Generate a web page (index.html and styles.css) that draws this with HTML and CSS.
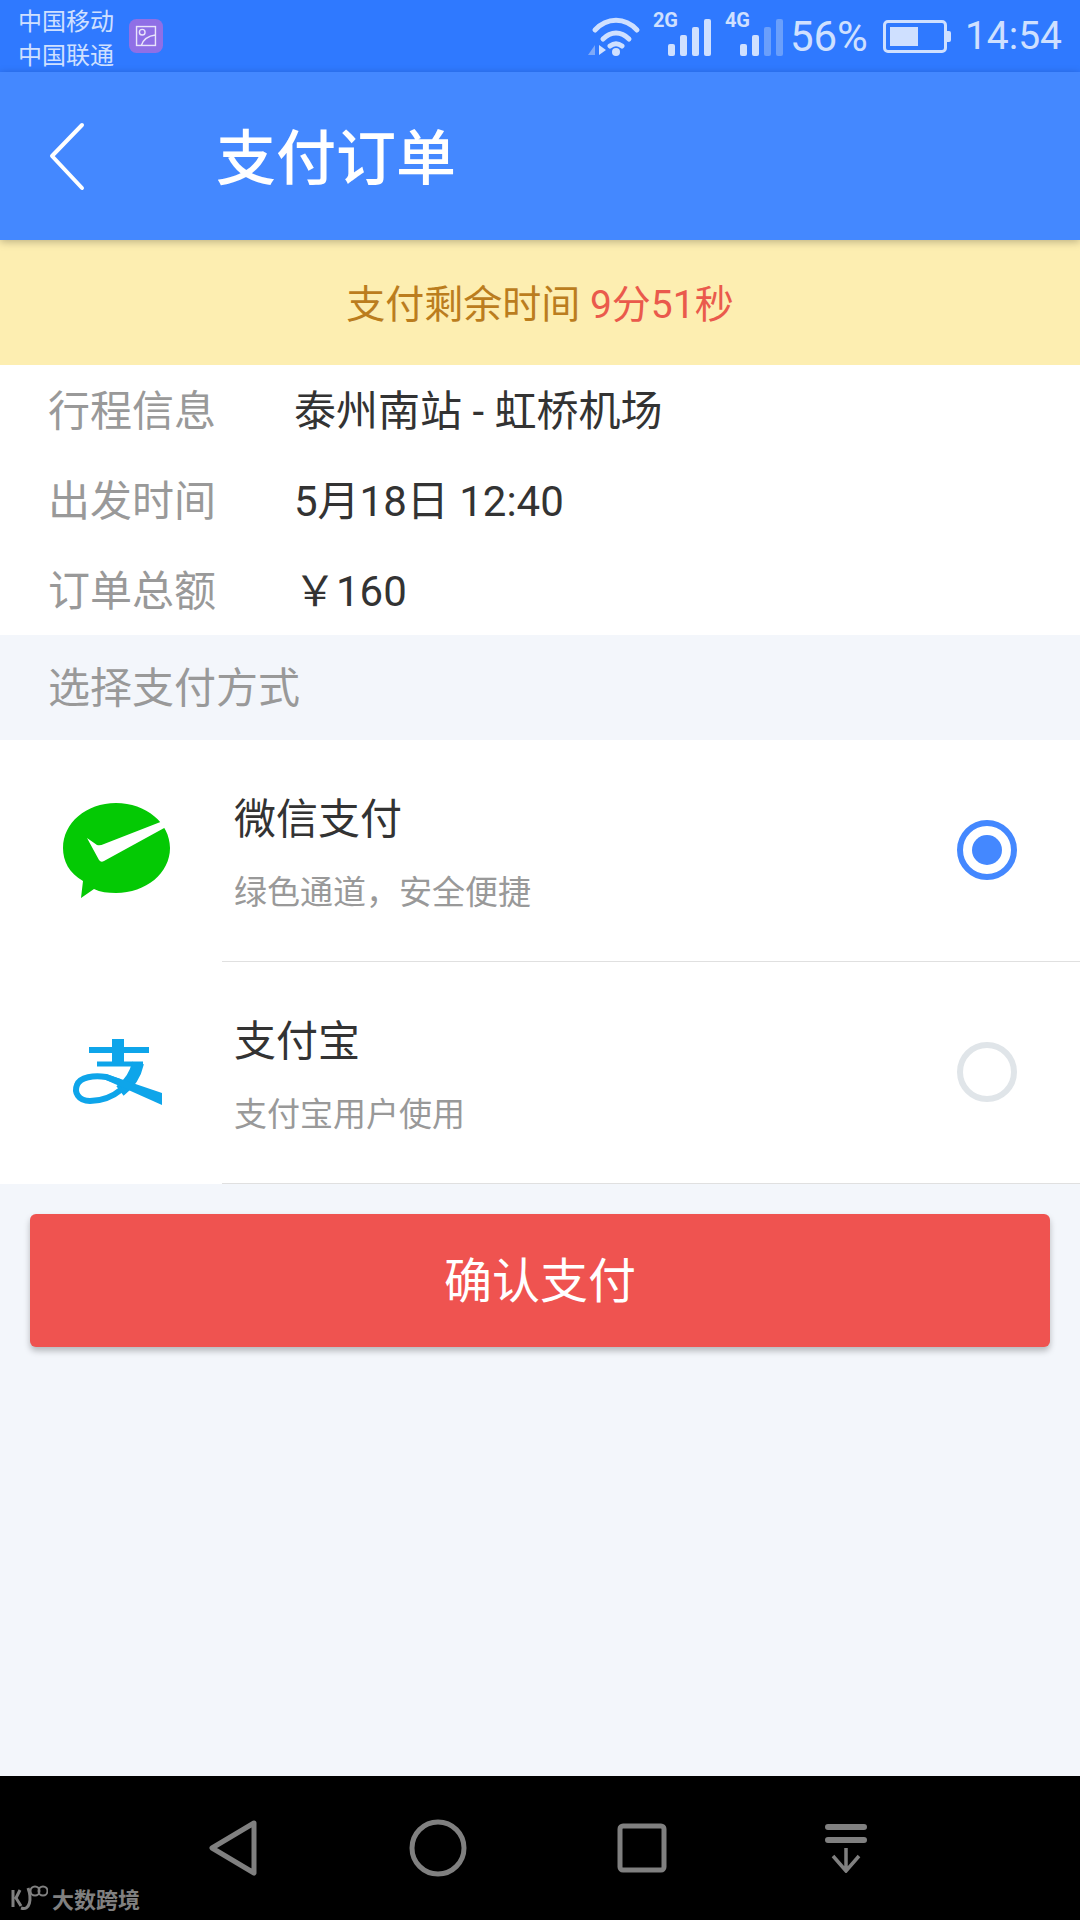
FILE: index.html
```html
<!DOCTYPE html>
<html>
<head>
  <title>支付订单</title>
  <meta name="viewport" content="width=device-width, initial-scale=1">
  <link rel="stylesheet" href="styles.css">
</head>
<body>
  <div class="statusbar">
    <div class="carriers">
      <span>中国移动</span>
      <span>中国联通</span>
    </div>
    <svg class="notify" width="34" height="34" viewBox="0 0 36 36">
      <rect width="36" height="36" rx="8" fill="#8f6fe6"/>
      <rect x="8" y="8" width="20" height="20" fill="none" stroke="#e8e4fb" stroke-width="1.5"/>
      <circle cx="14" cy="14" r="3" fill="none" stroke="#e8e4fb" stroke-width="1.5"/>
      <path d="M13 28 C15 22 20 18 28 17" fill="none" stroke="#e8e4fb" stroke-width="1.5"/>
    </svg>
    <div class="status-right">
      <svg class="wifi" width="58" height="42" viewBox="0 0 58 42">
        <g fill="none" stroke="#cfe0ff" stroke-width="5" stroke-linecap="round">
          <path d="M8 15 C20 2 38 2 50 15"/>
          <path d="M16 24 C24 16 34 16 42 24"/>
          <path d="M23 31 C27 28 31 28 35 31"/>
        </g>
        <circle cx="29" cy="37" r="4" fill="#cfe0ff"/>
        <path d="M8 30 L8 40 L1 40 Z" fill="#7ea9f8"/>
        <path d="M12 30 L19 35 L12 40 Z" fill="#cfe0ff"/>
      </svg>
      <div class="signal sim-one">
        <b>2G</b>
        <i class="bar b1"></i><i class="bar b2"></i><i class="bar b3"></i><i class="bar b4"></i>
      </div>
      <div class="signal sim-two">
        <b>4G</b>
        <i class="bar b1"></i><i class="bar b2"></i><i class="bar b3 dim"></i><i class="bar b4 dim"></i>
      </div>
      <span class="percent">56%</span>
      <div class="battery"><div class="battery-fill"></div></div>
      <span class="clock">14:54</span>
    </div>
  </div>

  <div class="header">
    <svg class="back" width="36" height="70" viewBox="0 0 36 70">
      <path d="M33 4 L3 35 L33 67" fill="none" stroke="#fff" stroke-width="4" stroke-linecap="round" stroke-linejoin="round"/>
    </svg>
    <h1>支付订单</h1>
  </div>

  <div class="main">
    <div class="countdown">支付剩余时间 <span class="remain">9分51秒</span></div>

    <div class="info">
      <div class="info-row"><label>行程信息</label><span>泰州南站 - 虹桥机场</span></div>
      <div class="info-row"><label>出发时间</label><span>5月18日 12:40</span></div>
      <div class="info-row"><label>订单总额</label><span>￥160</span></div>
    </div>

    <div class="section-title">选择支付方式</div>

    <div class="pay-list">
      <div class="pay-row">
        <div class="pay-icon">
          <svg width="112" height="100" viewBox="0 0 112 100">
            <path d="M56 2 C86 2 110 22 110 47 C110 72 86 92 56 92 C48 92 40 91 34 88 L21 97 L23 80 C9 72 3 60 3 47 C3 22 26 2 56 2 Z" fill="#04c904"/>
            <path d="M27 37 L37 44 Q40 45 44 43 L103 20 L106 26 L44 60 Q41 62 39 59 Z" fill="#fff"/>
          </svg>
        </div>
        <div class="pay-body">
          <div class="pay-text">
            <div class="pay-name">微信支付</div>
            <div class="pay-desc">绿色通道，安全便捷</div>
          </div>
          <div class="radio checked"></div>
        </div>
      </div>
      <div class="pay-row">
        <div class="pay-icon">
          <svg width="92" height="68" viewBox="0 0 92 68">
            <g fill="none" stroke="#0ea5ea">
              <path d="M19 11 H79" stroke-width="6"/>
              <path d="M27 25 H73" stroke-width="5"/>
              <path d="M48 0 V25" stroke-width="12"/>
              <path d="M68 24 C65 38 58 46 50 52" stroke-width="12"/>
              <path d="M52 50 C40 60 28 62 20 62 C8 62 4 53 7 46 C10 38 24 36 36 38 L50 43" stroke-width="6"/>
            </g>
            <path d="M36 35 L92 54 V66 L36 41 Z" fill="#0ea5ea"/>
          </svg>
        </div>
        <div class="pay-body">
          <div class="pay-text">
            <div class="pay-name">支付宝</div>
            <div class="pay-desc">支付宝用户使用</div>
          </div>
          <div class="radio"></div>
        </div>
      </div>
    </div>

    <button class="confirm">确认支付</button>
  </div>

  <div class="navbar">
    <svg width="50" height="56" viewBox="0 0 50 56">
      <path d="M45 3 L3 28 L45 53 Z" fill="none" stroke="#808080" stroke-width="5" stroke-linejoin="round"/>
    </svg>
    <svg width="58" height="58" viewBox="0 0 58 58">
      <circle cx="29" cy="29" r="26" fill="none" stroke="#808080" stroke-width="5"/>
    </svg>
    <svg width="50" height="50" viewBox="0 0 50 50">
      <rect x="3" y="3" width="44" height="44" rx="3" fill="none" stroke="#808080" stroke-width="5"/>
    </svg>
    <svg class="nav-last" width="42" height="50" viewBox="0 0 42 50">
      <path d="M3 4 H39 M3 17 H39" stroke="#808080" stroke-width="6" stroke-linecap="round"/>
      <path d="M21 25 V47 M8 33 L21 48 L34 33" fill="none" stroke="#808080" stroke-width="3.5"/>
    </svg>
    <div class="watermark">
      <svg width="38" height="26" viewBox="0 0 38 26">
        <g fill="none" stroke="#808080">
          <path d="M3 5 V22 M10 5 L6 13 L11 21" stroke-width="3"/>
          <path d="M11 23 C20 26 22 14 18 3" stroke-width="3"/>
          <circle cx="25" cy="6" r="4.5" stroke-width="2"/>
          <circle cx="33" cy="6" r="4.5" stroke-width="2"/>
        </g>
      </svg>
      <span>大数跨境</span>
    </div>
  </div>
</body>
</html>
```

FILE: styles.css
```css
*, *::before, *::after {
  box-sizing: border-box;
  margin: 0;
  padding: 0;
}

html, body {
  height: 100%;
}

body {
  width: 1080px;
  height: 1920px;
  overflow: hidden;
  display: flex;
  flex-direction: column;
  font-family: Roboto, "Noto Sans CJK SC", sans-serif;
  background-color: #f3f6fb;
  color: #333333;
}

/* status bar */
.statusbar {
  height: 72px;
  flex: none;
  display: flex;
  align-items: center;
  padding: 0 18px;
  background-color: #2f79ff;
  color: #cfe0ff;
}

.carriers {
  display: flex;
  flex-direction: column;
  padding-top: 5px;
  font-size: 24px;
  line-height: 34px;
}

.notify {
  margin-left: 15px;
}

.status-right {
  margin-left: auto;
  display: flex;
  align-items: center;
  font-size: 42px;
  font-weight: 400;
}

.signal {
  position: relative;
  width: 58px;
  height: 40px;
  margin-left: 8px;
  display: flex;
  align-items: flex-end;
  justify-content: flex-end;
  gap: 5px;
}

.signal b {
  position: absolute;
  left: 0;
  top: -6px;
  font-size: 20px;
  font-weight: 700;
  line-height: 20px;
}

.sim-two {
  margin-left: 14px;
}

.bar {
  width: 7px;
  border-radius: 2px;
  background-color: #cfe0ff;
}

.bar.dim {
  background-color: #6a9ffb;
}

.b1 { height: 12px; }
.b2 { height: 21px; }
.b3 { height: 29px; }
.b4 { height: 37px; }

.percent {
  margin-left: 7px;
}

.battery {
  position: relative;
  width: 64px;
  height: 33px;
  margin-left: 15px;
  padding: 4px;
  border: 3px solid #cfe0ff;
  border-radius: 5px;
}

.battery::after {
  content: "";
  position: absolute;
  right: -7px;
  top: 8px;
  width: 4px;
  height: 11px;
  border-radius: 0 2px 2px 0;
  background-color: #cfe0ff;
}

.battery-fill {
  width: 56%;
  height: 100%;
  background-color: #cfe0ff;
}

.clock {
  margin-left: 18px;
  font-size: 39px;
}

/* title bar */
.header {
  position: relative;
  z-index: 1;
  height: 168px;
  flex: none;
  display: flex;
  align-items: center;
  padding-left: 49px;
  background-color: #4488ff;
  box-shadow: 0 2px 8px rgba(0, 0, 0, 0.25);
}

.header h1 {
  margin-left: 131px;
  padding-bottom: 5px;
  font-size: 60px;
  font-weight: 500;
  color: #ffffff;
}

/* content */
.main {
  flex: 1;
  display: flex;
  flex-direction: column;
}

.countdown {
  height: 125px;
  line-height: 130px;
  text-align: center;
  font-size: 39px;
  background-color: #fdeeb1;
  color: #bb7d1e;
}

.remain {
  color: #ea5a4c;
}

.info {
  background-color: #ffffff;
}

.info-row {
  height: 90px;
  display: flex;
  align-items: center;
  padding-left: 48px;
  padding-bottom: 5px;
  font-size: 42px;
}

.info-row label {
  width: 246px;
  color: #999999;
}

.section-title {
  height: 105px;
  line-height: 107px;
  padding-left: 48px;
  font-size: 42px;
  color: #999999;
}

.pay-list {
  background-color: #ffffff;
}

.pay-row {
  height: 222px;
  display: flex;
}

.pay-icon {
  width: 222px;
  flex: none;
  display: flex;
  align-items: center;
  justify-content: center;
  padding-left: 10px;
}

.pay-body {
  flex: 1;
  display: flex;
  align-items: center;
  justify-content: space-between;
  padding-right: 63px;
  padding-left: 12px;
  border-bottom: 1px solid #e0e0e0;
}

.pay-text {
  padding-top: 4px;
}

.pay-name {
  font-size: 42px;
  line-height: 60px;
}

.pay-desc {
  margin-top: 20px;
  font-size: 33px;
  line-height: 46px;
  color: #999999;
}

.radio {
  width: 60px;
  height: 60px;
  margin-bottom: 2px;
  border: 6px solid #e0e5e9;
  border-radius: 50%;
}

.radio.checked {
  border-color: #4488ff;
  padding: 9px;
}

.radio.checked::before {
  content: "";
  display: block;
  width: 30px;
  height: 30px;
  border-radius: 50%;
  background-color: #4488ff;
}

.confirm {
  height: 133px;
  margin: 30px 30px 0;
  padding-bottom: 7px;
  font-family: inherit;
  font-size: 48px;
  color: #ffffff;
  background-color: #ef5350;
  border: none;
  border-radius: 6px;
  box-shadow: 0 4px 6px rgba(0, 0, 0, 0.25);
}

/* system nav */
.navbar {
  position: relative;
  height: 144px;
  flex: none;
  display: flex;
  align-items: center;
  gap: 150px;
  padding-left: 209px;
  background-color: #000000;
}

.nav-last {
  margin-left: 8px;
}

.watermark {
  position: absolute;
  left: 10px;
  bottom: 6px;
  display: flex;
  align-items: center;
  gap: 4px;
  font-size: 22px;
  font-weight: 700;
  color: #808080;
}
```
